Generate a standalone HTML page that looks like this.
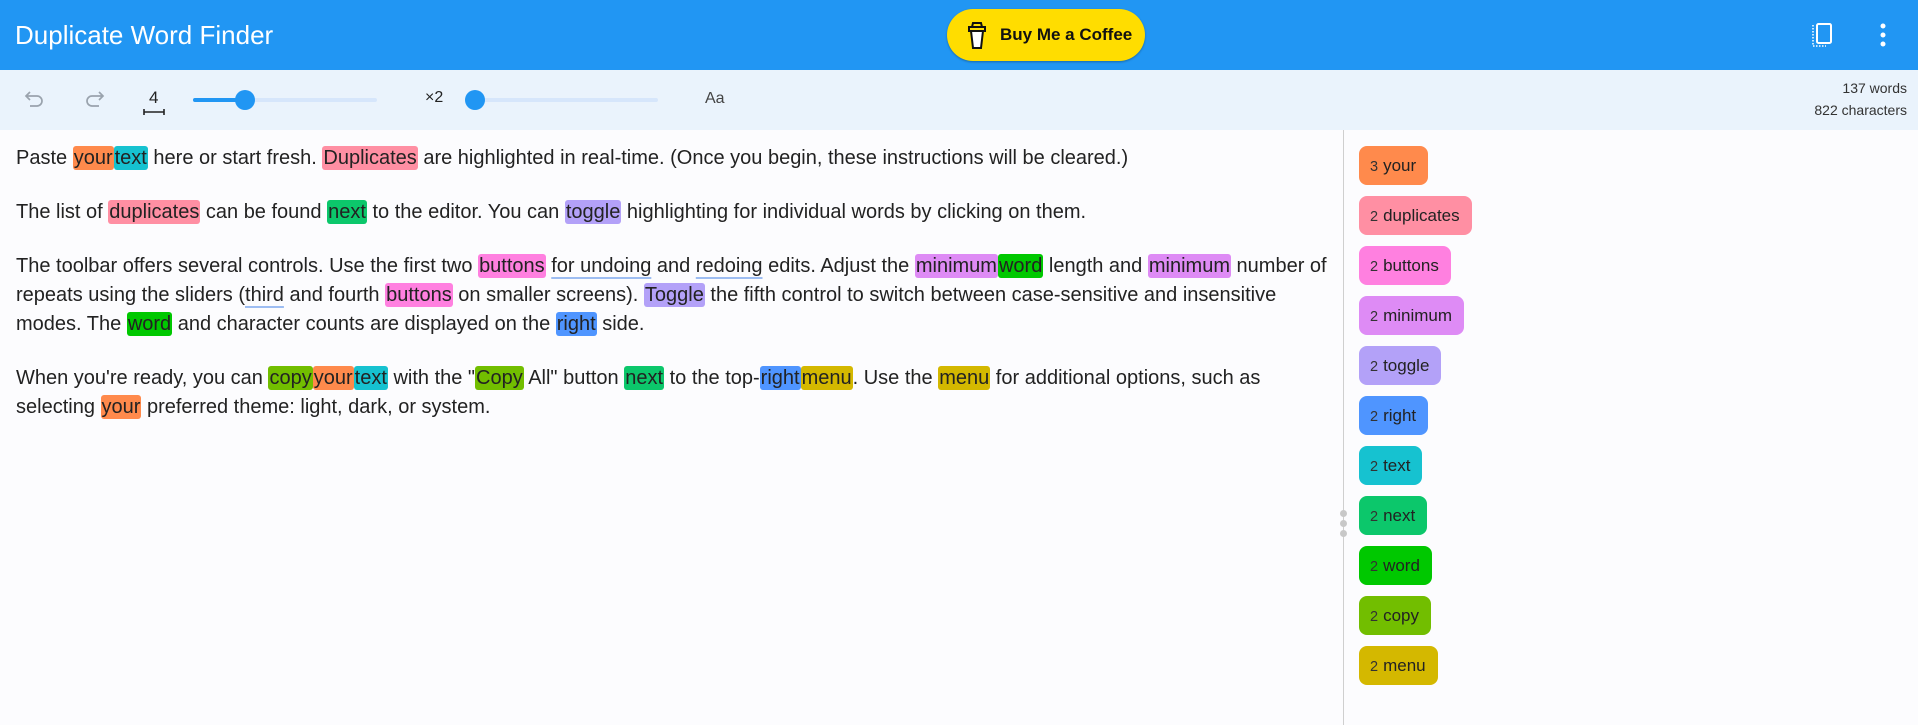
<!DOCTYPE html>
<html><head><meta charset="utf-8"><style>
*{margin:0;padding:0;box-sizing:border-box}
body{width:1918px;height:725px;overflow:hidden;background:#fcfcfe;font-family:"Liberation Sans",Arial,sans-serif;color:#222;position:relative}
.hdr{position:absolute;left:0;top:0;width:1918px;height:70px;background:#2196F3}
.title{position:absolute;left:15px;top:20px;color:#fff;font-size:26px}
.bmc{position:absolute;left:947px;top:9px;width:198px;height:52px;background:#FFDD00;border-radius:26px;box-shadow:0 1px 2px rgba(0,0,0,.3)}
.bmc span{position:absolute;left:53px;top:16px;font-size:17px;font-weight:bold;color:#111}
.tb{position:absolute;left:0;top:70px;width:1918px;height:60px;background:#EAF3FC}
.abs{position:absolute}
.track{position:absolute;height:4px;background:#d6e6fb;border-radius:2px}
.fill{position:absolute;height:4px;background:#2196F3;border-radius:2px}
.thumb{position:absolute;width:20px;height:20px;border-radius:50%;background:#2196F3}
.cnt{position:absolute;right:11px;font-size:14px;color:#333;text-align:right}
.ed{position:absolute;left:16px;top:144px;width:1326px;font-size:20px;line-height:29px;color:#222;white-space:nowrap}
.ed p{margin-bottom:25px}
.h{border-radius:3px;padding:1px 1px}
.u{text-decoration:underline;text-decoration-color:#9dbdf2;text-decoration-thickness:2px;text-underline-offset:5px}
.div{position:absolute;left:1343px;top:130px;width:1px;height:595px;background:#cfcfcf}
.grip{position:absolute;left:1340px;width:7px;height:7px;border-radius:50%;background:#c8c8c8}
.chips{position:absolute;left:1359px;top:146px}
.chip{height:39px;border-radius:8px;margin-bottom:11px;display:block;width:max-content;padding:0 12px 0 11px;font-size:17px;line-height:39px;color:#222;white-space:nowrap;overflow:hidden}
.chip small{font-size:14.5px;margin-right:5px;color:#333}
.o{background:#FF8A4C}.c{background:#16C2D0}.p{background:#FF8FA3}.g{background:#0CC76B}.v{background:#B3A1F8}
.m{background:#FF80E0}.l{background:#DE8BF5}.w{background:#00C800}.b{background:#4F95FF}.y{background:#72BE00}.k{background:#D4B800}
</style></head><body>
<div class="hdr">
<div class="title">Duplicate Word Finder</div>
<div class="bmc">
<svg class="abs" style="left:20px;top:13px" width="20" height="28" viewBox="0 0 20 28"><path d="M4 9 L6 26 H14 L16 9 Z" fill="#fff" stroke="#111" stroke-width="2"/><rect x="2" y="5" width="16" height="4" fill="#FFDD00" stroke="#111" stroke-width="2"/><path d="M5 5 L6 1 H14 L15 5" fill="none" stroke="#111" stroke-width="2"/></svg>
<span>Buy Me a Coffee</span></div>
<svg class="abs" style="left:1811px;top:22px" width="24" height="26" viewBox="0 0 24 26"><rect x="6" y="2" width="14" height="19" rx="1.5" fill="none" stroke="#fff" stroke-width="2"/><path d="M2 3 V24 H15" fill="none" stroke="#fff" stroke-width="1.5" stroke-dasharray="1.5 1.5"/></svg>
<svg class="abs" style="left:1878px;top:22px" width="10" height="26"><circle cx="5" cy="4" r="2.5" fill="#fff"/><circle cx="5" cy="13" r="2.5" fill="#fff"/><circle cx="5" cy="22" r="2.5" fill="#fff"/></svg>
</div>
<div class="tb">
<svg class="abs" style="left:24px;top:18px" width="22" height="22" viewBox="0 0 22 22"><path d="M6 4 L2 8 L6 12 M2 8 H13 A5 5 0 0 1 13 18 H6" fill="none" stroke="#9aa3ad" stroke-width="1.7"/></svg>
<svg class="abs" style="left:83px;top:18px" width="22" height="22" viewBox="0 0 22 22"><path d="M16 4 L20 8 L16 12 M20 8 H9 A5 5 0 0 0 9 18 H16" fill="none" stroke="#9aa3ad" stroke-width="1.7"/></svg>
<div class="abs" style="left:149px;top:18px;font-size:17px;color:#222">4</div>
<svg class="abs" style="left:143px;top:38px" width="22" height="8"><path d="M1 1V7M21 1V7M1 4H21" stroke="#222" stroke-width="1.6"/></svg>
<div class="track" style="left:193px;top:28px;width:184px"></div>
<div class="fill" style="left:193px;top:28px;width:52px"></div>
<div class="thumb" style="left:235px;top:20px"></div>
<div class="abs" style="left:425px;top:19px;font-size:16px;color:#222">×2</div>
<div class="track" style="left:475px;top:28px;width:183px"></div>
<div class="thumb" style="left:465px;top:20px"></div>
<div class="abs" style="left:705px;top:20px;font-size:16px;color:#444">Aa</div>
<div class="cnt" style="top:10px">137 words</div>
<div class="cnt" style="top:32px">822 characters</div>
</div>
<div class="ed">
<p>Paste <span class="h o">your</span><span class="h c">text</span> here or start fresh. <span class="h p">Duplicates</span> are highlighted in real-time. (Once you begin, these instructions will be cleared.)</p>
<p>The list of <span class="h p">duplicates</span> can be found <span class="h g">next</span> to the editor. You can <span class="h v">toggle</span> highlighting for individual words by clicking on them.</p>
<p>The toolbar offers several controls. Use the first two <span class="h m">buttons</span> <span class="u">for undoing</span> and <span class="u">redoing</span> edits. Adjust the <span class="h l">minimum</span><span class="h w">word</span> length and <span class="h l">minimum</span> number of<br>repeats using the sliders (<span class="u">third</span> and fourth <span class="h m">buttons</span> on smaller screens). <span class="h v">Toggle</span> the fifth control to switch between case-sensitive and insensitive<br>modes. The <span class="h w">word</span> and character counts are displayed on the <span class="h b">right</span> side.</p>
<p>When you're ready, you can <span class="h y">copy</span><span class="h o">your</span><span class="h c">text</span> with the "<span class="h y">Copy</span> All" button <span class="h g">next</span> to the top-<span class="h b">right</span><span class="h k">menu</span>. Use the <span class="h k">menu</span> for additional options, such as<br>selecting <span class="h o">your</span> preferred theme: light, dark, or system.</p>
</div>
<div class="div"></div>
<div class="grip" style="top:510px"></div><div class="grip" style="top:520px"></div><div class="grip" style="top:530px"></div>
<div class="chips">
<div class="chip o"><small>3</small>your</div>
<div class="chip p"><small>2</small>duplicates</div>
<div class="chip m"><small>2</small>buttons</div>
<div class="chip l"><small>2</small>minimum</div>
<div class="chip v"><small>2</small>toggle</div>
<div class="chip b"><small>2</small>right</div>
<div class="chip c"><small>2</small>text</div>
<div class="chip g"><small>2</small>next</div>
<div class="chip w"><small>2</small>word</div>
<div class="chip y"><small>2</small>copy</div>
<div class="chip k"><small>2</small>menu</div>
</div>
</body></html>
